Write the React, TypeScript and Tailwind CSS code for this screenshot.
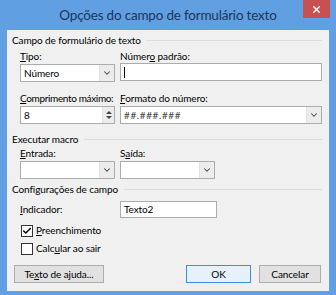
import { Check, ChevronDown, X } from "lucide-react"

const font = { fontFamily: 'Lato, "Noto Sans", sans-serif' }

function U({ children }: { children: string }) {
  return <span className="underline underline-offset-[1px]">{children}</span>
}

function GroupHeader({ label }: { label: string }) {
  return (
    <div className="flex items-center gap-[6px] h-[13px]">
      <span className="whitespace-nowrap">{label}</span>
      <div className="flex-1 h-px bg-[#dcdcdc] mr-[7px]" />
    </div>
  )
}

function DropButton() {
  return (
    <div className="w-[15px] h-full border-l border-[#e2e2e2] bg-[#ececec] flex items-center justify-center">
      <ChevronDown size={10} strokeWidth={2.5} className="text-[#444]" />
    </div>
  )
}

function Select({ value, w }: { value?: string; w: string }) {
  return (
    <div className={`${w} h-[18px] bg-white border border-[#acacac] flex items-stretch`}>
      <div className="flex-1 px-[3px] leading-[16px]">{value}</div>
      <DropButton />
    </div>
  )
}

function Btn({ label, w, primary }: { label: React.ReactNode; w: string; primary?: boolean }) {
  return (
    <div
      className={`${w} h-[18px] flex items-center justify-center border ${
        primary ? "border-[#3c8fe0] bg-[#e5f1fb]" : "border-[#adadad] bg-[#e1e1e1]"
      }`}
    >
      {label}
    </div>
  )
}

export default function App() {
  return (
    <div className="w-[336px] h-[295px] bg-[#5f9fe2] flex flex-col px-[7px] pb-[4px]" style={font}>
      {/* title bar */}
      <div className="relative h-[30px] flex items-center justify-center">
        <span className="text-[13.5px] tracking-[-0.2px] text-[#1d3658] pt-[1px]">
          Opções do campo de formulário texto
        </span>
        <div className="absolute top-0 right-[-1px] w-[27px] h-[18px] bg-[#c75050] flex items-center justify-center">
          <X size={11} strokeWidth={3} className="text-white" />
        </div>
      </div>

      {/* body */}
      <div className="flex-1 bg-[#f0f0f0] text-[10px] tracking-[-0.1px] text-black pl-[5px] pt-[4px] flex flex-col whitespace-nowrap">
        <GroupHeader label="Campo de formulário de texto" />
        <div className="pl-[8px] mt-[3px] flex gap-[5px]">
          <div className="flex flex-col w-[95px]">
            <div className="h-[13px] leading-[13px]">
              <U>T</U>ipo:
            </div>
            <div className="mt-[1px]">
              <Select value="Número" w="w-[95px]" />
            </div>
          </div>
          <div className="flex flex-col flex-1 mr-[7px]">
            <div className="h-[13px] leading-[13px]">
              Númer<U>o</U> padrão:
            </div>
            <div className="h-[18px] bg-white border border-[#acacac] flex items-center px-[3px]">
              <div className="w-px h-[11px] bg-black" />
            </div>
          </div>
        </div>

        <div className="pl-[8px] mt-[10px] flex gap-[5px]">
          <div className="flex flex-col w-[95px]">
            <div className="h-[13px] leading-[13px] tracking-[-0.35px]">
              <U>C</U>omprimento máximo:
            </div>
            <div className="mt-[1px] h-[18px] bg-white border border-[#acacac] flex items-stretch">
              <div className="flex-1 px-[3px] leading-[16px]">8</div>
              <div className="w-[12px] border-l border-[#e2e2e2] bg-[#ececec] flex flex-col items-center justify-center gap-[2px]">
                <div className="w-0 h-0 border-l-[3px] border-r-[3px] border-b-[3px] border-l-transparent border-r-transparent border-b-[#444]" />
                <div className="w-0 h-0 border-l-[3px] border-r-[3px] border-t-[3px] border-l-transparent border-r-transparent border-t-[#444]" />
              </div>
            </div>
          </div>
          <div className="flex flex-col flex-1 mr-[7px]">
            <div className="h-[13px] leading-[13px]">
              <U>F</U>ormato do número:
            </div>
            <div className="mt-[1px]">
              <div className="h-[18px] bg-white border border-[#acacac] flex items-stretch">
                <div className="flex-1 px-[3px] leading-[16px] tracking-[0.6px] text-[#444]">##.###.###</div>
                <DropButton />
              </div>
            </div>
          </div>
        </div>

        <div className="mt-[9px]">
          <GroupHeader label="Executar macro" />
        </div>
        <div className="pl-[8px] mt-[1px] flex gap-[5px]">
          <div className="flex flex-col w-[95px]">
            <div className="h-[13px] leading-[13px]">
              <U>E</U>ntrada:
            </div>
            <div className="mt-[1px]">
              <Select w="w-[95px]" />
            </div>
          </div>
          <div className="flex flex-col w-[95px]">
            <div className="h-[13px] leading-[13px]">
              S<U>a</U>ída:
            </div>
            <div className="mt-[1px]">
              <Select w="w-[95px]" />
            </div>
          </div>
        </div>

        <div className="mt-[4px]">
          <GroupHeader label="Configurações de campo" />
        </div>
        <div className="pl-[8px] mt-[5px] flex items-center gap-[5px]">
          <div className="w-[95px]">
            <U>I</U>ndicador:
          </div>
          <div className="w-[97px] h-[17px] bg-white border border-[#acacac] px-[3px] leading-[15px]">Texto2</div>
        </div>

        <div className="pl-[9px] mt-[6px] flex items-center gap-[3px] h-[13px]">
          <div className="w-[12px] h-[12px] bg-white border border-[#333] flex items-center justify-center">
            <Check size={10} strokeWidth={3.5} className="text-black" />
          </div>
          <span>
            <U>P</U>reenchimento
          </span>
        </div>
        <div className="pl-[9px] mt-[5px] flex items-center gap-[3px] h-[13px]">
          <div className="w-[12px] h-[12px] bg-white border border-[#333]" />
          <span>
            Calc<U>u</U>lar ao sair
          </span>
        </div>

        <div className="mt-[10px] flex items-center pl-[2px] pr-[8px]">
          <Btn
            w="w-[90px]"
            label={
              <span>
                Te<U>x</U>to de ajuda...
              </span>
            }
          />
          <div className="flex-1" />
          <Btn w="w-[65px]" label="OK" primary />
          <div className="w-[8px]" />
          <Btn w="w-[62px]" label="Cancelar" />
        </div>
      </div>
    </div>
  )
}
